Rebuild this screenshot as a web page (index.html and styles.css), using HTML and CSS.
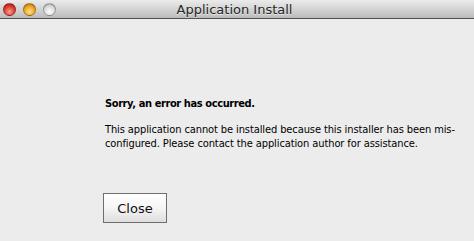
FILE: index.html
```html
<!DOCTYPE html>
<html lang="en">
<head>
    <meta charset="UTF-8">
    <title>Application Install</title>
    <link rel="stylesheet" href="styles.css">
</head>
<body>

<div class="window">
    <div class="titlebar">
        <div class="lights">
            <span class="light red"></span>
            <span class="light yellow"></span>
            <span class="light gray"></span>
        </div>
        <div class="title">Application Install</div>
    </div>

    <div class="content">
        <h1>Sorry, an error has occurred.</h1>
        <p>This application cannot be installed because this installer has been mis-<br>configured. Please contact the application author for assistance.</p>
        <button class="close-btn">Close</button>
    </div>
</div>

</body>
</html>
```

FILE: styles.css
```css
* {
    margin: 0;
    padding: 0;
    box-sizing: border-box;
}
body {
    width: 474px;
    height: 241px;
    overflow: hidden;
    background-color: #ececec;
    font-family: 'DejaVu Sans', sans-serif;
    color: #000;
}
.window {
    display: flex;
    flex-direction: column;
    height: 100%;
}
.titlebar {
    height: 19px;
    background: linear-gradient(#ebebeb, #d2d2d2 55%, #bcbcbc);
    border-bottom: 1px solid #515151;
    display: flex;
    align-items: center;
}
.lights {
    display: flex;
    gap: 7px;
    padding-left: 3px;
}
.light {
    width: 13px;
    height: 13px;
    border-radius: 50%;
    border: 1px solid rgba(0, 0, 0, 0.3);
}
.light.red {
    background: radial-gradient(circle at 50% 70%, #ff9c8e, #dd3b31 55%, #9c1610);
}
.light.yellow {
    background: radial-gradient(circle at 50% 70%, #ffe08a, #efa522 55%, #ad6a08);
}
.light.gray {
    background: radial-gradient(circle at 50% 70%, #ffffff, #dadada 55%, #a2a2a2);
}
.title {
    flex: 1;
    text-align: center;
    margin-right: 61px;
    font-size: 13px;
    color: #262626;
    text-shadow: 0 1px 0 rgba(255, 255, 255, 0.6);
}
.content {
    padding: 78px 0 0 105px;
}
.content h1,
.content p {
    font-family: 'DejaVu Sans Condensed', 'DejaVu Sans', sans-serif;
    font-size: 11px;
    line-height: 14px;
    white-space: nowrap;
    letter-spacing: -0.1px;
}
.content h1 {
    font-weight: bold;
    letter-spacing: -0.4px;
    margin-bottom: 12px;
}
.close-btn {
    display: block;
    margin: 42px 0 0 -2px;
    width: 64px;
    height: 30px;
    border: 1px solid #6e6e6e;
    background: linear-gradient(#ffffff, #f5f5f5 50%, #dedede);
    font-family: 'DejaVu Sans', sans-serif;
    font-size: 13px;
    color: #111;
}
```
